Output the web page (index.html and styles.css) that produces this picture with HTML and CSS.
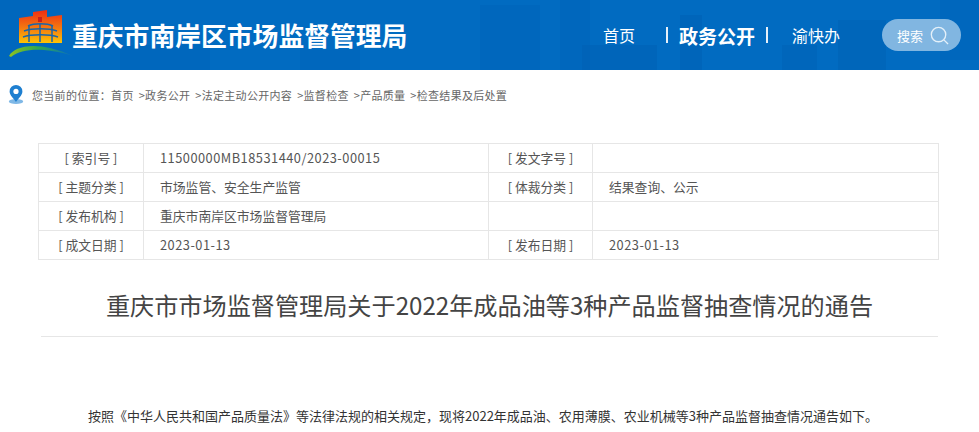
FILE: index.html
```html
<!DOCTYPE html>
<html lang="zh-CN">
<head>
<meta charset="utf-8">
<title>重庆市南岸区市场监督管理局</title>
<link rel="stylesheet" href="styles.css">
</head>
<body>
<header class="header">
  <svg class="skyline" viewBox="0 0 979 70" preserveAspectRatio="none" aria-hidden="true">
    <g fill="#0062b6">
      <rect x="0" y="0" width="60" height="70" opacity=".35"/>
      <rect x="120" y="45" width="90" height="25" opacity=".4"/>
      <rect x="300" y="50" width="60" height="20" opacity=".4"/>
      <rect x="480" y="5" width="60" height="65" opacity=".4"/>
      <rect x="560" y="0" width="30" height="70" opacity=".35"/>
      <rect x="582" y="45" width="75" height="25" opacity=".7"/>
      <rect x="680" y="15" width="22" height="55" opacity=".7"/>
      <rect x="782" y="45" width="35" height="25" opacity=".5"/>
      <rect x="838" y="20" width="48" height="50" opacity=".6"/>
      <rect x="940" y="0" width="39" height="60" opacity=".4"/>
    </g>
  </svg>
  <div class="brand">
    <svg class="logo" viewBox="0 0 64 48" aria-hidden="true">
      <defs>
        <linearGradient id="lg" x1="0" y1="0" x2="0" y2="1">
          <stop offset="0" stop-color="#ee2c14"/>
          <stop offset=".55" stop-color="#f47a10"/>
          <stop offset="1" stop-color="#fdc305"/>
        </linearGradient>
        <linearGradient id="lb" x1="0" y1="0" x2="1" y2="0">
          <stop offset="0" stop-color="#8fc31f"/>
          <stop offset=".45" stop-color="#2fa84f"/>
          <stop offset="1" stop-color="#0a6fc0"/>
        </linearGradient>
      </defs>
      <path fill="url(#lg)" d="M10 9 24 7V3L38 1V8L53 6V34H10Z"/>
      <path fill="#c8201a" d="M29 8h4v5h-4z"/>
      <g fill="none" stroke="#1a65a8" stroke-width="1.5">
        <path d="M19 17c6-3 19-3 25 0"/>
        <path d="M15 22c8-3 25-3 33 0"/>
        <path d="M14 28c8-3 27-3 35 0"/>
        <path d="M20 17v16M43 17v16M31 15v18"/>
      </g>
      <path fill="url(#lb)" d="M0 47C6 37 28 31 64 47 40 39 14 38 2 48Z"/>
    </svg>
    <div class="site-name">重庆市南岸区市场监督管理局</div>
  </div>
  <nav class="nav">
    <a class="nav-home">首页</a>
    <span class="nav-sep nav-sep-a"></span>
    <a class="nav-current">政务公开</a>
    <span class="nav-sep nav-sep-b"></span>
    <a class="nav-yu">渝快办</a>
  </nav>
  <div class="search">
    <span>搜索</span>
    <svg class="search-icon" viewBox="0 0 20 20" aria-hidden="true">
      <circle cx="9" cy="9" r="7.6"/>
      <path d="M14.6 14.6 19 19"/>
    </svg>
  </div>
</header>

<div class="crumbs">
  <svg class="pin" viewBox="0 0 16 20" aria-hidden="true">
    <ellipse cx="8" cy="16.5" rx="7.2" ry="2.6" class="pin-base"/>
    <path class="pin-body" d="M8 0a6.4 6.4 0 0 0-6.4 6.4C1.600 10.400 6 13.500 8 17c2-3.500 6.400-6.600 6.400-10.600A6.400 6.400 0 0 0 8 0Z"/>
    <circle cx="8" cy="6.400" r="2.600" fill="#fff"/>
  </svg>
  <span>您当前的位置：首页</span>
  <span class="crumb">&gt;政务公开</span>
  <span class="crumb">&gt;法定主动公开内容</span>
  <span class="crumb">&gt;监督检查</span>
  <span class="crumb">&gt;产品质量</span>
  <span class="crumb">&gt;检查结果及后处置</span>
</div>

<table class="meta">
  <colgroup>
    <col class="c1"><col class="c2"><col class="c3"><col class="c4">
  </colgroup>
  <tr>
    <th>[ 索引号 ]</th><td class="num">11500000MB18531440/2023-00015</td>
    <th>[ 发文字号 ]</th><td></td>
  </tr>
  <tr>
    <th>[ 主题分类 ]</th><td>市场监管、安全生产监管</td>
    <th>[ 体裁分类 ]</th><td>结果查询、公示</td>
  </tr>
  <tr>
    <th>[ 发布机构 ]</th><td>重庆市南岸区市场监督管理局</td>
    <th></th><td></td>
  </tr>
  <tr>
    <th>[ 成文日期 ]</th><td class="num">2023-01-13</td>
    <th>[ 发布日期 ]</th><td class="num">2023-01-13</td>
  </tr>
</table>

<h1 class="title">重庆市市场监督管理局关于2022年成品油等3种产品监督抽查情况的通告</h1>

<p class="lead">按照《中华人民共和国产品质量法》等法律法规的相关规定，现将2022年成品油、农用薄膜、农业机械等3种产品监督抽查情况通告如下。</p>
</body>
</html>
```
FILE: styles.css
```css
* { box-sizing: border-box; }
html, body { margin: 0; padding: 0; }
body {
  width: 979px;
  height: 432px;
  overflow: hidden;
  background: #fff;
  color: #444;
  font-family: "Noto Sans CJK SC", "Liberation Sans", sans-serif;
}
.header {
  position: relative;
  display: flex;
  align-items: center;
  height: 70px;
  background: #016bc1;
  color: #fff;
}
.skyline { position: absolute; inset: 0; width: 100%; height: 100%; }
.brand, .nav, .search { position: relative; }
.brand {
  display: flex;
  align-items: center;
  margin-left: 9px;
  width: 578px;
}
.logo { width: 64px; height: 48px; margin-bottom: 4px; flex: none; }
.site-name {
  margin-left: -1px;
  font-size: 25.8px;
  font-weight: 700;
  line-height: 1;
  white-space: nowrap;
}
.nav {
  display: flex;
  align-items: center;
  font-size: 16px;
  width: 295px;
}
.nav-home { margin-left: 16px; }
.nav-sep { width: 2px; height: 16px; background: #e6f0f9; }
.nav-sep-a { margin-left: 31px; }
.nav-current { margin-left: 11px; font-size: 19px; font-weight: 700; }
.nav-sep-b { margin-left: 11px; }
.nav-yu { margin-left: 24px; }
.search {
  display: flex;
  align-items: center;
  width: 79px;
  height: 32px;
  padding-left: 15px;
  border-radius: 16px;
  background: #81b6e1;
  font-size: 13px;
}
.search-icon {
  width: 19px;
  height: 19px;
  margin-left: 7px;
  fill: none;
  stroke: #e4f0f9;
  stroke-width: 1.4;
}
.crumbs {
  display: flex;
  align-items: center;
  height: 50px;
  padding-left: 8px;
  font-size: 11px;
  letter-spacing: .3px;
  color: #666;
  white-space: nowrap;
}
.pin { width: 16px; height: 20px; margin-right: 8px; flex: none; }
.pin-body { fill: #1e7fd0; }
.pin-base { fill: #7fb8e6; }
.crumb { margin-left: 5px; }
.meta {
  width: 901px;
  margin: 23px 0 0 38px;
  border-collapse: collapse;
  table-layout: fixed;
  font-size: 12.8px;
}
.c1 { width: 105px; }
.c2 { width: 345px; }
.c3 { width: 104px; }
.c4 { width: 346px; }
.meta th, .meta td {
  height: 29px;
  padding: 0 0 2px;
  border: 1px solid #e6e6e6;
  font-weight: 400;
  color: #555;
}
.meta th { text-align: center; }
.meta td { padding-left: 16px; }
.meta .num { letter-spacing: .5px; }
.title {
  width: 897px;
  height: 63px;
  margin: 14px 0 0 41px;
  padding: 14px 0 0;
  border-bottom: 1px solid #e6e6e6;
  font-size: 24.15px;
  font-weight: 400;
  line-height: 34px;
  text-align: center;
  color: #444;
  white-space: nowrap;
}
.lead {
  margin: 70px 0 0;
  padding-left: 88px;
  font-size: 13px;
  line-height: 18px;
  color: #333;
  white-space: nowrap;
}
```
